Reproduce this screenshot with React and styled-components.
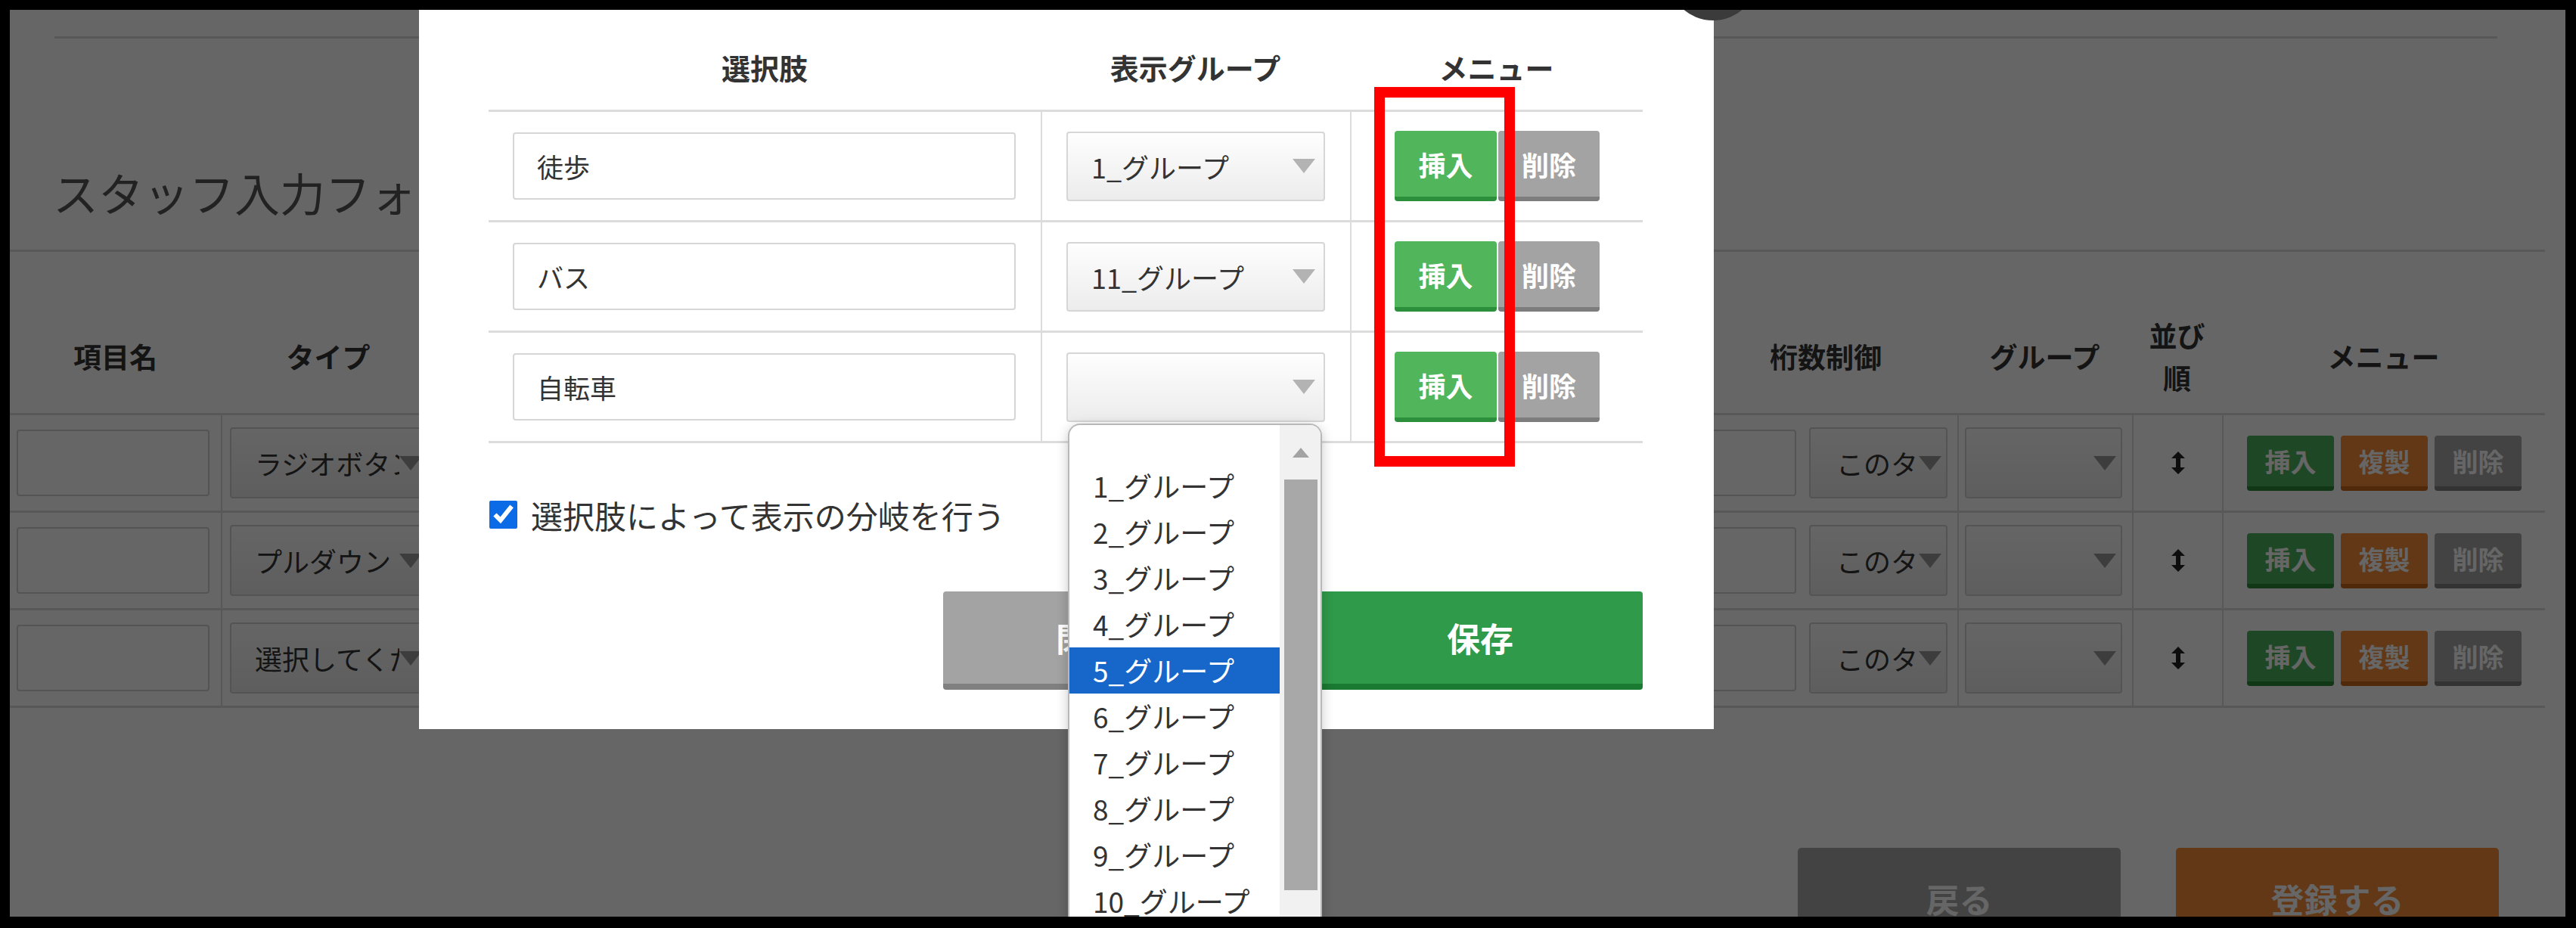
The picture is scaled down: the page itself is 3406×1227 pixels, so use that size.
import React from 'react'
import styled, { createGlobalStyle } from 'styled-components'

const GlobalStyle = createGlobalStyle`
  * { box-sizing: border-box; }
  html, body { margin: 0; padding: 0; background: #000; }
  body {
    font-family: "Noto Sans CJK JP", "Noto Sans", sans-serif;
    color: #333;
  }
`

const Frame = styled.div`
  width: 3406px;
  height: 1227px;
  padding: 13px 14px 15px 13px;
  background: #000;
`

const Screen = styled.div`
  position: relative;
  width: 100%;
  height: 100%;
  overflow: hidden;
  background: #fff;
`

/* ---------- page behind the modal ---------- */

const Page = styled.div`
  padding-top: 35px;
`

const Rule = styled.div`
  height: 3px;
  background: #dcdcdc;
  margin: ${p => p.$margin || '0'};
`

const Title = styled.h1`
  margin: 0;
  height: 279px;
  padding: 163px 0 0 57px;
  font-size: 60px;
  font-weight: 400;
  line-height: 80px;
  color: #555;
  white-space: nowrap;
`

const pageCols = '279px 284px 1664px 348px 231px 119px 427px'

const PTable = styled.div`
  width: 3352px;
`

const PHead = styled.div`
  display: grid;
  grid-template-columns: ${pageCols};
  height: 216px;
  padding-top: 63px;
  border-bottom: 3px solid #dcdcdc;
`

const PHeadCell = styled.div`
  display: flex;
  align-items: center;
  justify-content: center;
  text-align: center;
  font-size: 37px;
  font-weight: 700;
  line-height: 56px;
  color: #333;
`

const PRow = styled.div`
  display: grid;
  grid-template-columns: ${pageCols};
  height: 129px;
  border-bottom: 3px solid #dcdcdc;
`

const PCell = styled.div`
  display: flex;
  align-items: center;
  justify-content: ${p => p.$justify || 'flex-start'};
  gap: ${p => p.$gap || '0'};
  padding: ${p => p.$pad || '0'};
  border-left: ${p => (p.$first ? 'none' : '2px solid #dcdcdc')};
  overflow: hidden;
`

const PInput = styled.div`
  flex: none;
  width: ${p => p.$w}px;
  height: 88px;
  border: 2px solid #d2d2d2;
  border-radius: 4px;
  background: #fff;
`

const PSelect = styled.div`
  flex: none;
  display: flex;
  align-items: center;
  width: ${p => p.$w}px;
  height: 94px;
  padding: 0 6px 0 ${p => p.$padLeft || 30}px;
  border: 2px solid #d2d2d2;
  border-radius: 4px;
  background: linear-gradient(#fdfdfd, #ebebeb);
  font-size: 36px;
  color: #333;
`

const SelectText = styled.span`
  flex: 1;
  overflow: hidden;
  white-space: nowrap;
`

const Arrow = styled.span`
  flex: none;
  width: 0;
  height: 0;
  border-left: 15px solid transparent;
  border-right: 15px solid transparent;
  border-top: 19px solid ${p => p.$color || '#b3b3b3'};
`

const PSmallButton = styled.div`
  width: 115px;
  height: 73px;
  display: flex;
  align-items: center;
  justify-content: center;
  background: ${p => p.$bg};
  border-bottom: 6px solid ${p => p.$edge};
  border-radius: 4px;
  color: #fff;
  font-size: 34px;
  font-weight: 700;
`

const PFooter = styled.div`
  display: flex;
  justify-content: flex-end;
  gap: 73px;
  padding-right: 88px;
  margin-top: 185px;
`

const PBigButton = styled.div`
  width: 427px;
  height: 134px;
  display: flex;
  align-items: center;
  justify-content: center;
  background: ${p => p.$bg};
  border-radius: 5px;
  color: #fff;
  font-size: 44px;
  font-weight: 700;
`

const Overlay = styled.div`
  position: absolute;
  inset: 0;
  background: rgba(0, 0, 0, 0.6);
`

/* ---------- modal ---------- */

const Modal = styled.div`
  position: absolute;
  left: 541px;
  top: 0;
  width: 1712px;
  height: 951px;
  background: #fff;
`

const modalCols = '730px 409px 387px'

const MTable = styled.div`
  padding: 0 94px 0 92px;
`

const MHead = styled.div`
  display: grid;
  grid-template-columns: ${modalCols};
  height: 135px;
  padding-top: 18px;
  border-bottom: 3px solid #dcdcdc;
`

const MHeadCell = styled.div`
  display: flex;
  align-items: center;
  justify-content: center;
  font-size: 38px;
  font-weight: 700;
  color: #333;
`

const MRow = styled.div`
  display: grid;
  grid-template-columns: ${modalCols};
  height: 146px;
  border-bottom: 3px solid #dcdcdc;
`

const MCell = styled.div`
  display: flex;
  align-items: center;
  justify-content: ${p => p.$justify || 'flex-start'};
  gap: ${p => p.$gap || '0'};
  padding: ${p => p.$pad || '0'};
  border-left: ${p => (p.$first ? 'none' : '2px solid #dcdcdc')};
`

const MInput = styled.div`
  flex: 1;
  height: 89px;
  display: flex;
  align-items: center;
  padding-left: 30px;
  border: 2px solid #d6d6d6;
  border-radius: 4px;
  background: #fff;
  font-size: 35px;
  color: #333;
`

const MSelect = styled.div`
  flex: 1;
  height: 92px;
  display: flex;
  align-items: center;
  padding: 0 11px 0 31px;
  border: 2px solid #d6d6d6;
  border-radius: 4px;
  background: linear-gradient(#fefefe, #ececec);
  font-size: 36px;
  color: #333;
`

const MButton = styled.div`
  width: ${p => p.$w}px;
  height: 93px;
  display: flex;
  align-items: center;
  justify-content: center;
  background: ${p => p.$bg};
  border-bottom: 6px solid ${p => p.$edge};
  border-radius: 4px;
  color: #fff;
  font-size: 36px;
  font-weight: 700;
`

const CheckRow = styled.label`
  display: flex;
  align-items: center;
  gap: 18px;
  height: 60px;
  margin-top: 64px;
  padding-left: 93px;
  font-size: 42px;
  color: #333;
`

const Check = styled.input`
  width: 37px;
  height: 37px;
  margin: 0;
  accent-color: #0b6be6;
`

const MFooter = styled.div`
  display: flex;
  justify-content: flex-end;
  gap: 65px;
  margin-top: 72px;
  padding-right: 94px;
`

const MBigButton = styled.div`
  width: 430px;
  height: 130px;
  display: flex;
  align-items: center;
  justify-content: center;
  background: ${p => p.$bg};
  border-bottom: 8px solid ${p => p.$edge};
  border-radius: 4px;
  color: #fff;
  font-size: 44px;
  font-weight: 700;
`

const Highlight = styled.div`
  position: absolute;
  left: 1263px;
  top: 102px;
  width: 186px;
  height: 502px;
  border: 14px solid #ff0000;
`

const CloseButton = styled.div`
  position: absolute;
  left: 2192px;
  top: -106px;
  width: 120px;
  height: 120px;
  border-radius: 50%;
  background: #3b3b3b;
`

/* ---------- open select list ---------- */

const Dropdown = styled.div`
  position: absolute;
  left: 1399px;
  top: 547px;
  width: 336px;
  height: 720px;
  display: flex;
  background: #fff;
  border: 2px solid #b8b8b8;
  border-bottom: none;
  border-radius: 16px 16px 0 0;
  box-shadow: 0 4px 16px rgba(0, 0, 0, 0.22);
  overflow: hidden;
`

const OptionList = styled.div`
  flex: 1;
  padding-top: 50px;
`

const Option = styled.div`
  height: 61px;
  line-height: 61px;
  padding-left: 31px;
  font-size: 37px;
  white-space: nowrap;
  color: ${p => (p.$active ? '#fff' : '#333')};
  background: ${p => (p.$active ? '#1766c9' : 'transparent')};
`

const ScrollBar = styled.div`
  flex: none;
  width: 54px;
  background: #f1f1f1;
  padding: 0 4px 0 6px;
`

const ScrollUp = styled.div`
  height: 72px;
  display: flex;
  align-items: center;
  justify-content: center;
  &::before {
    content: '';
    border-left: 11px solid transparent;
    border-right: 11px solid transparent;
    border-bottom: 13px solid #a3a3a3;
  }
`

const ScrollThumb = styled.div`
  height: 543px;
  background: #a8a8a8;
`

const SortIcon = () => (
  <svg width="18" height="30" viewBox="0 0 18 30">
    <polygon points="9,0 18,9 12,9 12,21 18,21 9,30 0,21 6,21 6,9 0,9" fill="#222" />
  </svg>
)

const pageRows = ['ラジオボタン', 'プルダウン', '選択してください']
const choices = [
  { name: '徒歩', group: '1_グループ' },
  { name: 'バス', group: '11_グループ' },
  { name: '自転車', group: '' },
]
const groups = Array.from({ length: 12 }, (_, i) => `${i + 1}_グループ`)

export default function App() {
  return (
    <Frame>
      <GlobalStyle />
      <Screen>
        <Page>
          <Rule $margin="0 90px 0 59px" />
          <Title>スタッフ入力フォーム設定</Title>
          <Rule $margin="0 27px 0 0" />
          <PTable>
            <PHead>
              <PHeadCell>項目名</PHeadCell>
              <PHeadCell>タイプ</PHeadCell>
              <PHeadCell />
              <PHeadCell>桁数制御</PHeadCell>
              <PHeadCell>グループ</PHeadCell>
              <PHeadCell>並び<br />順</PHeadCell>
              <PHeadCell>メニュー</PHeadCell>
            </PHead>
            {pageRows.map(type => (
              <PRow key={type}>
                <PCell $first $pad="0 0 0 9px"><PInput $w={255} /></PCell>
                <PCell $pad="0 0 0 10px">
                  <PSelect $w={262} $padLeft={31}>
                    <SelectText>{type}</SelectText>
                    <Arrow $color="#9a9a9a" />
                  </PSelect>
                </PCell>
                <PCell />
                <PCell $pad="0 0 0 8px" $gap="17px">
                  <PInput $w={125} />
                  <PSelect $w={183} $padLeft={34}>
                    <SelectText>このタイプ</SelectText>
                    <Arrow $color="#9a9a9a" />
                  </PSelect>
                </PCell>
                <PCell $pad="0 0 0 8px">
                  <PSelect $w={208}>
                    <SelectText />
                    <Arrow $color="#9a9a9a" />
                  </PSelect>
                </PCell>
                <PCell $justify="center"><SortIcon /></PCell>
                <PCell $justify="center" $gap="9px">
                  <PSmallButton $bg="#4cb45c" $edge="#2b8a3b">挿入</PSmallButton>
                  <PSmallButton $bg="#f58c37" $edge="#c8661c">複製</PSmallButton>
                  <PSmallButton $bg="#a8a8a8" $edge="#808080">削除</PSmallButton>
                </PCell>
              </PRow>
            ))}
          </PTable>
          <PFooter>
            <PBigButton $bg="#a8a8a8">戻る</PBigButton>
            <PBigButton $bg="#f58c37">登録する</PBigButton>
          </PFooter>
        </Page>

        <Overlay />

        <Modal>
          <MTable>
            <MHead>
              <MHeadCell>選択肢</MHeadCell>
              <MHeadCell>表示グループ</MHeadCell>
              <MHeadCell>メニュー</MHeadCell>
            </MHead>
            {choices.map(c => (
              <MRow key={c.name}>
                <MCell $first $pad="0 33px 0 32px"><MInput>{c.name}</MInput></MCell>
                <MCell $pad="0 33px 0 32px">
                  <MSelect>
                    <SelectText>{c.group}</SelectText>
                    <Arrow />
                  </MSelect>
                </MCell>
                <MCell $justify="center" $gap="2px">
                  <MButton $w={135} $bg="#50b55b" $edge="#2c8f3b">挿入</MButton>
                  <MButton $w={134} $bg="#a3a3a3" $edge="#7d7d7d">削除</MButton>
                </MCell>
              </MRow>
            ))}
          </MTable>
          <CheckRow>
            <Check type="checkbox" checked readOnly />
            選択肢によって表示の分岐を行う
          </CheckRow>
          <MFooter>
            <MBigButton $bg="#a3a3a3" $edge="#808080">閉じる</MBigButton>
            <MBigButton $bg="#2f9a4a" $edge="#1b7a32">保存</MBigButton>
          </MFooter>
          <Highlight />
        </Modal>

        <CloseButton />

        <Dropdown>
          <OptionList>
            {groups.map(g => (
              <Option key={g} $active={g === '5_グループ'}>{g}</Option>
            ))}
          </OptionList>
          <ScrollBar>
            <ScrollUp />
            <ScrollThumb />
          </ScrollBar>
        </Dropdown>
      </Screen>
    </Frame>
  )
}
